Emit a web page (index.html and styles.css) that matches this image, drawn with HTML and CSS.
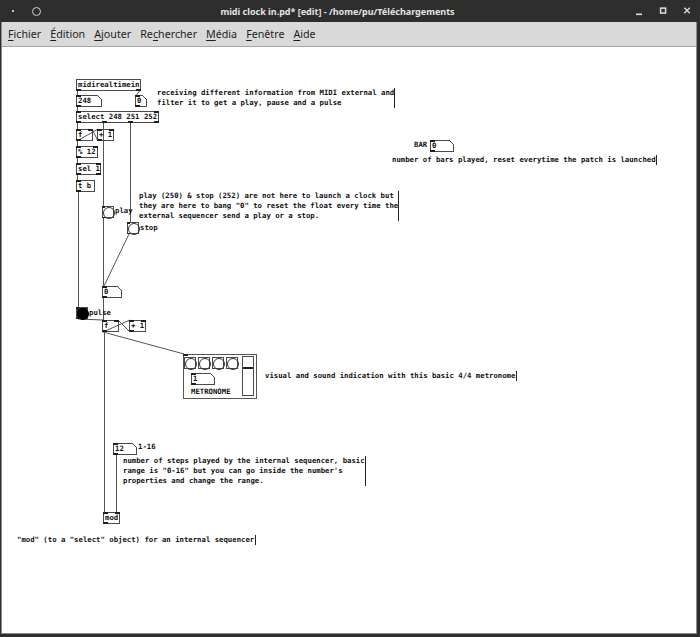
FILE: index.html
```html
<!DOCTYPE html>
<html lang="fr">
<head>
<meta charset="utf-8">
<title>midi clock in.pd</title>
<link rel="stylesheet" href="styles.css">
</head>
<body>
<div class="window">
  <header class="titlebar">
    <div class="tb-left"><span class="tb-dot"></span><span class="tb-ring"></span></div>
    <div class="title">midi clock in.pd* [edit] - /home/pu/Téléchargements</div>
    <div class="tb-right">
      <svg viewBox="0 0 10 10"><rect x="2" y="7.5" width="6" height="1.6" fill="#dcdcdc"/></svg>
      <svg viewBox="0 0 10 10"><rect x="2.6" y="2.1" width="5" height="5" fill="none" stroke="#dcdcdc" stroke-width="1.5"/></svg>
      <svg viewBox="0 0 10 10"><path d="M2.3 1.8 L7.8 7.3 M7.8 1.8 L2.3 7.3" stroke="#dcdcdc" stroke-width="1.4" fill="none"/></svg>
    </div>
  </header>
  <div class="client">
    <nav class="menubar">
      <span class="mi"><u>F</u>ichier</span>
      <span class="mi"><u>É</u>dition</span>
      <span class="mi"><u>A</u>jouter</span>
      <span class="mi">Re<u>c</u>hercher</span>
      <span class="mi"><u>M</u>édia</span>
      <span class="mi"><u>F</u>enêtre</span>
      <span class="mi"><u>A</u>ide</span>
    </nav>
    <main class="canvas">
      <div class="patch">
        <svg class="wires" viewBox="0 0 700 637">
          <g stroke="#555" stroke-width="1" fill="none">
            <line x1="77.5" y1="91" x2="77.5" y2="95"/>
            <line x1="139.5" y1="91" x2="136.5" y2="95"/>
            <line x1="77.5" y1="107" x2="77.5" y2="111"/>
            <line x1="77.5" y1="123" x2="77.5" y2="129"/>
            <line x1="103.5" y1="123" x2="103.5" y2="206"/>
            <line x1="130.5" y1="123" x2="130.5" y2="222"/>
            <line x1="77" y1="141" x2="98" y2="129"/>
            <line x1="98" y1="141" x2="92" y2="129"/>
            <line x1="77.5" y1="141" x2="77.5" y2="146"/>
            <line x1="77.5" y1="158" x2="77.5" y2="163"/>
            <line x1="77.5" y1="175" x2="77.5" y2="180"/>
            <line x1="78.5" y1="192" x2="78.5" y2="307"/>
            <line x1="103.5" y1="218" x2="103.5" y2="286"/>
            <line x1="129" y1="234" x2="104" y2="286"/>
            <line x1="103.5" y1="298" x2="103.5" y2="320"/>
            <line x1="78" y1="319" x2="103" y2="320"/>
            <line x1="103" y1="332" x2="130" y2="320"/>
            <line x1="130" y1="332" x2="118" y2="320"/>
            <line x1="103" y1="332" x2="184" y2="354"/>
            <line x1="104.5" y1="332" x2="104.5" y2="512"/>
            <line x1="116.5" y1="455" x2="116.5" y2="512"/>
          </g>
        </svg>

        <div class="obj" style="left:76px;top:79px;width:65px">midirealtimein<i class="io out l"></i><i class="io out r"></i></div>
        <div class="atom" style="left:76px;top:95px;width:26px">248<i class="io in l"></i><i class="io out l"></i></div>
        <div class="atom" style="left:135px;top:95px;width:12px">0<i class="io in l"></i><i class="io out l"></i></div>
        <div class="cmt" style="left:157px;top:88px;width:238px">receiving different information from MIDI external and
filter it to get a play, pause and a pulse</div>

        <div class="obj" style="left:76px;top:111px;width:83px">select 248 251 252<i class="io in l"></i><i class="io in r"></i><i class="io out l"></i><i class="io out" style="left:25px"></i><i class="io out" style="left:51px"></i><i class="io out r"></i></div>

        <div class="obj" style="left:76px;top:129px;width:17px">f<i class="io in l"></i><i class="io in r"></i><i class="io out l"></i></div>
        <div class="obj" style="left:97px;top:129px;width:17px">+ 1<i class="io in l"></i><i class="io in r"></i><i class="io out l"></i></div>
        <div class="obj" style="left:76px;top:146px;width:22px">% 12<i class="io in l"></i><i class="io in r"></i><i class="io out l"></i></div>
        <div class="obj" style="left:76px;top:163px;width:25px">sel 1<i class="io in l"></i><i class="io in r"></i><i class="io out l"></i><i class="io out r"></i></div>
        <div class="obj" style="left:76px;top:180px;width:19px">t b<i class="io in l"></i><i class="io out l"></i></div>

        <div class="lbl" style="left:414px;top:140px">BAR</div>
        <div class="atom" style="left:430px;top:140px;width:24px">0<i class="io in l"></i><i class="io out l"></i></div>
        <div class="cmt" style="left:392px;top:155px;width:265px">number of bars played, reset everytime the patch is launched</div>

        <div class="cmt" style="left:139px;top:191px;width:260px">play (250) &amp; stop (252) are not here to launch a clock but
they are here to bang "0" to reset the float every time the
external sequencer send a play or a stop.</div>

        <div class="bng" style="left:102px;top:206px"><i class="io in l"></i><i class="io out l"></i></div>
        <div class="lbl" style="left:115px;top:206px">play</div>
        <div class="bng" style="left:127px;top:222px"><i class="io in l"></i><i class="io out l"></i></div>
        <div class="lbl" style="left:140px;top:223px">stop</div>

        <div class="atom" style="left:102px;top:286px;width:20px">0<i class="io in l"></i><i class="io out l"></i></div>

        <div class="bng on" style="left:76px;top:307px"><i class="io in l"></i><i class="io out l"></i></div>
        <div class="lbl" style="left:89px;top:308px">pulse</div>

        <div class="obj" style="left:102px;top:320px;width:17px">f<i class="io in l"></i><i class="io in r"></i><i class="io out l"></i></div>
        <div class="obj" style="left:129px;top:320px;width:17px">+ 1<i class="io in l"></i><i class="io in r"></i><i class="io out l"></i></div>

        <div class="gop" style="left:183px;top:354px;width:74px;height:45px"><i class="io in l"></i></div>
        <div class="bng" style="left:184px;top:357px"></div>
        <div class="bng" style="left:198px;top:357px"></div>
        <div class="bng" style="left:212px;top:357px"></div>
        <div class="bng" style="left:226px;top:357px"></div>
        <div class="vsl" style="left:242px;top:356px;width:12px;height:40px"><i class="knob" style="top:10px"></i></div>
        <div class="atom" style="left:191px;top:373px;width:24px">1<i class="io in l"></i><i class="io out l"></i></div>
        <div class="lbl" style="left:191px;top:387px">METRONOME</div>
        <div class="cmt" style="left:265px;top:371px;width:252px">visual and sound indication with this basic 4/4 metronome</div>

        <div class="atom" style="left:113px;top:443px;width:24px">12<i class="io in l"></i><i class="io out l"></i></div>
        <div class="lbl" style="left:138px;top:442px">1-16</div>
        <div class="cmt" style="left:123px;top:456px;width:243px">number of steps played by the internal sequencer, basic
range is "0-16" but you can go inside the number's
properties and change the range.</div>

        <div class="obj" style="left:103px;top:512px;width:17px">mod<i class="io in l"></i><i class="io in r"></i><i class="io out l"></i></div>
        <div class="cmt" style="left:17px;top:535px;width:239px">"mod" (to a "select" object) for an internal sequencer</div>
      </div>
    </main>
  </div>
</div>
</body>
</html>
```
FILE: styles.css
```css
* { box-sizing: border-box; }
html, body { margin: 0; padding: 0; }
body {
  width: 700px;
  height: 637px;
  overflow: hidden;
  background: #2e2e2e;
  font-family: "Noto Sans", "Open Sans", sans-serif;
}
.window {
  display: flex;
  flex-direction: column;
  width: 700px;
  height: 637px;
}
.titlebar {
  flex: none;
  height: 22px;
  display: flex;
  align-items: center;
  background: #2e2e2e;
  color: #e4e4e4;
}
.tb-left {
  width: 60px;
  display: flex;
  align-items: center;
  padding-left: 12px;
  gap: 18px;
}
.tb-dot { width: 2px; height: 2px; background: #c8c8c8; }
.tb-ring {
  width: 9px;
  height: 9px;
  border: 1.5px solid #d2d2d2;
  border-radius: 50%;
}
.title {
  flex: 1;
  text-align: center;
  font-weight: 700;
  font-size: 9px;
  white-space: nowrap;
}
.tb-right {
  width: 85px;
  display: flex;
  align-items: center;
  gap: 14px;
  padding-left: 19px;
}
.tb-right svg { width: 10px; height: 10px; display: block; }

.client {
  flex: 1;
  min-height: 0;
  display: flex;
  flex-direction: column;
  margin: 0 3px 3px 1px;
  border: 1px solid #8c8c8c;
  border-top: none;
  background: #fff;
}
.menubar {
  flex: none;
  height: 25px;
  display: flex;
  align-items: center;
  gap: 9px;
  padding-left: 6px;
  background: #d9d9d9;
  border-bottom: 1px solid #a6a6a6;
  font-size: 10.7px;
  color: #1e1e1e;
}
.mi u { text-underline-offset: 2px; }
.canvas {
  flex: 1;
  position: relative;
  overflow: hidden;
  background: #fff;
}
.patch {
  position: absolute;
  left: -2px;
  top: -47px;
  width: 700px;
  height: 637px;
  font: bold 7.3px/10px "DejaVu Sans Mono", monospace;
  color: #111;
}
.wires {
  position: absolute;
  left: 0;
  top: 0;
  width: 700px;
  height: 637px;
}
.obj, .atom {
  position: absolute;
  height: 12px;
  border: 1px solid #4a4a4a;
  padding-left: 1px;
  white-space: pre;
  line-height: 10px;
}
.atom::after {
  content: "";
  position: absolute;
  top: -1px;
  right: -1px;
  width: 5px;
  height: 5px;
  background: linear-gradient(45deg, transparent 44%, #4a4a4a 44%, #4a4a4a 58%, #fff 58%);
}
.io {
  position: absolute;
  width: 5px;
  height: 2px;
  background: #1e1e1e;
}
.io.in { top: -1px; }
.io.out { bottom: -1px; }
.io.l { left: -1px; }
.io.r { right: -1px; }
.bng .io { width: 3px; height: 1.5px; }

.bng {
  position: absolute;
  width: 12px;
  height: 12px;
  border: 1px solid #4a4a4a;
}
.bng::after {
  content: "";
  position: absolute;
  left: 0;
  top: 0;
  width: 10px;
  height: 10px;
  border: 1px solid #333;
  border-radius: 50%;
}
.bng.on { background: #222; }
.bng.on::after { background: #000; border-color: #000; }

.vsl {
  position: absolute;
  border: 1px solid #4a4a4a;
}
.knob {
  position: absolute;
  left: 0;
  right: 0;
  height: 2px;
  background: #222;
}
.gop {
  position: absolute;
  border: 1px solid #555;
}
.lbl {
  position: absolute;
  white-space: pre;
}
.cmt {
  position: absolute;
  white-space: pre;
  border-right: 1px solid #222;
}
```
